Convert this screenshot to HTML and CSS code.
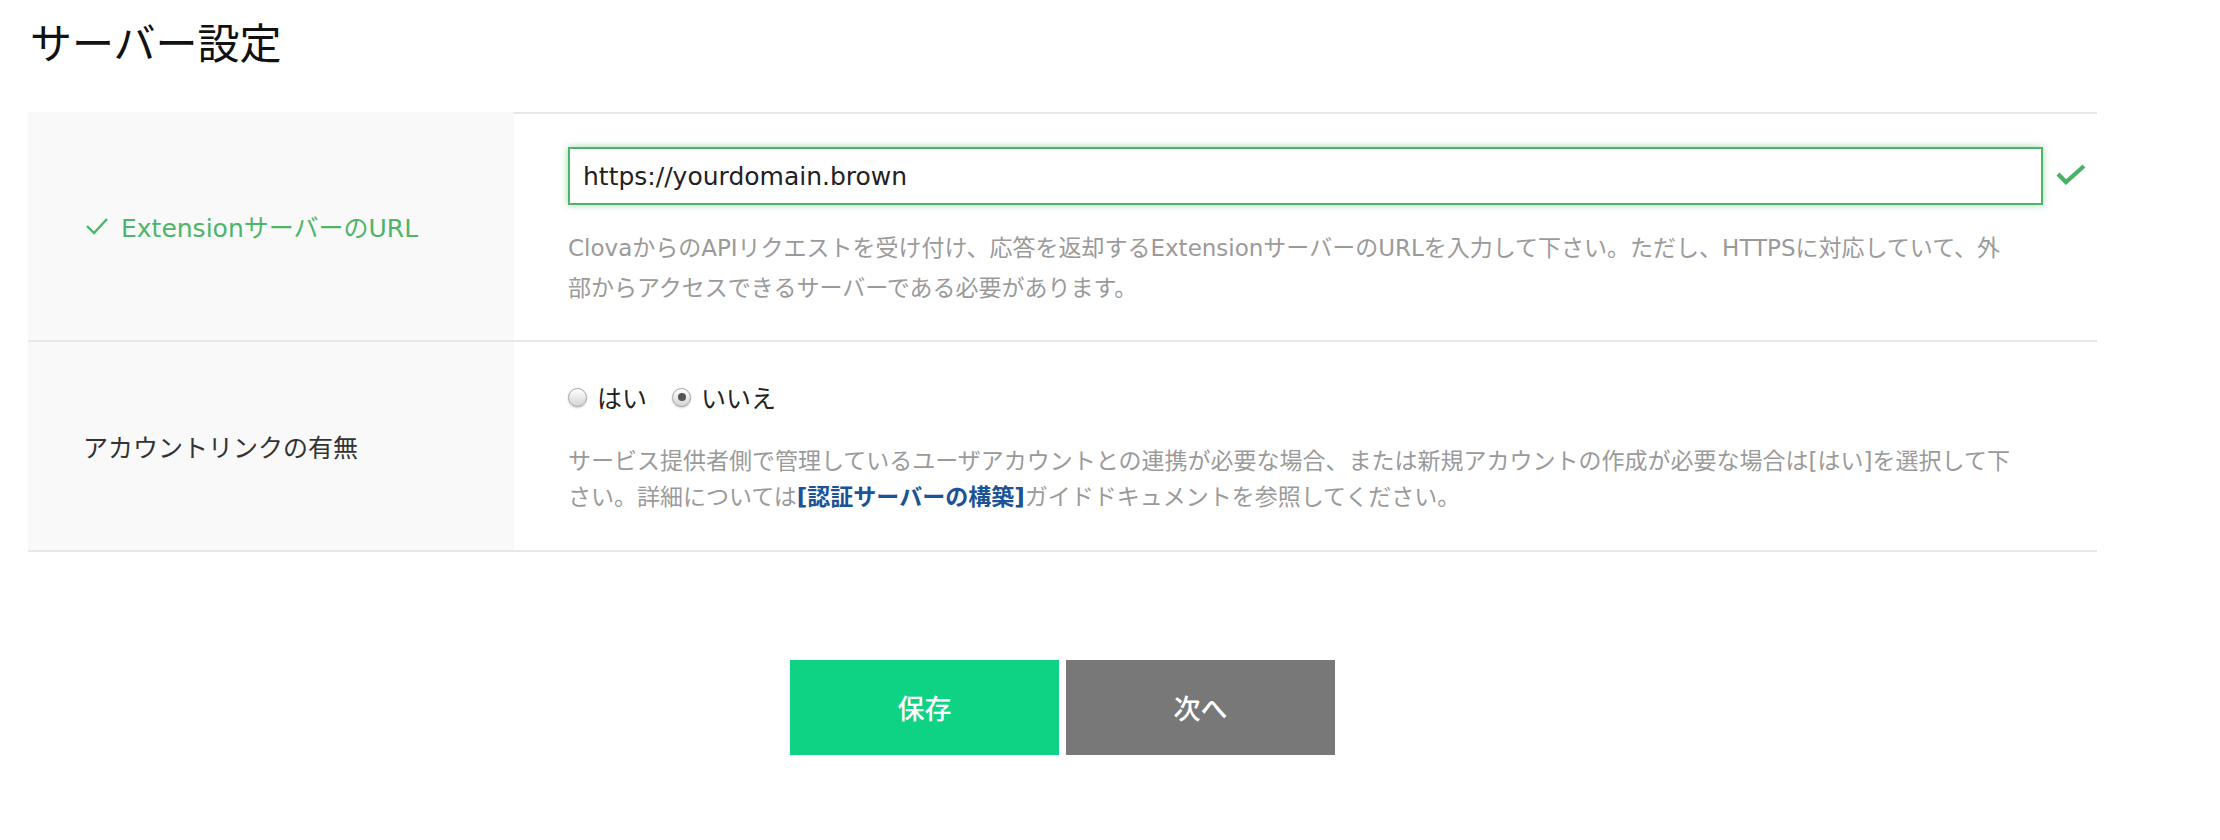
FILE: index.html
```html
<!DOCTYPE html>
<html lang="ja">
<head>
<meta charset="utf-8">
<title>サーバー設定</title>
<link rel="stylesheet" href="styles.css">
</head>
<body>
<div class="page">
  <h1 class="title">サーバー設定</h1>
  <div class="form">
    <div class="row row-first">
      <div class="label label-ok">
        <svg class="label-check" width="24" height="20" viewBox="0 0 24 20"><path d="M2 10 L9 17 L22 3" fill="none" stroke="#4db46a" stroke-width="2.4"/></svg>
        <span>ExtensionサーバーのURL</span>
      </div>
      <div class="value value-first">
        <div class="url-field">
          <input class="url-input" type="text" value="https://yourdomain.brown">
          <svg class="valid-check" width="32" height="24" viewBox="0 0 32 24"><path d="M3 11 L11 19 L29 3" fill="none" stroke="#47b266" stroke-width="4.2"/></svg>
        </div>
        <p class="desc desc-url">ClovaからのAPIリクエストを受け付け、応答を返却するExtensionサーバーのURLを入力して下さい。ただし、HTTPSに対応していて、外<br>部からアクセスできるサーバーである必要があります。</p>
      </div>
    </div>
    <div class="row">
      <div class="label">
        <span>アカウントリンクの有無</span>
      </div>
      <div class="value value-second">
        <div class="radios">
          <span class="radio"></span><span class="radio-text">はい</span>
          <span class="radio radio-on"></span><span class="radio-text">いいえ</span>
        </div>
        <p class="desc desc-link">サービス提供者側で管理しているユーザアカウントとの連携が必要な場合、または新規アカウントの作成が必要な場合は[はい]を選択して下<br>さい。詳細については<a class="doc-link" href="#">[認証サーバーの構築]</a>ガイドドキュメントを参照してください。</p>
      </div>
    </div>
  </div>
  <div class="actions">
    <button class="btn btn-save" type="button">保存</button>
    <button class="btn btn-next" type="button">次へ</button>
  </div>
</div>
</body>
</html>
```
FILE: styles.css
```css
html, body {
  margin: 0;
  padding: 0;
  background: #ffffff;
}

body {
  font-family: "DejaVu Sans", "Noto Sans CJK JP", sans-serif;
  color: #222222;
}

.page {
  padding-left: 28px;
  width: 2069px;
}

.title {
  margin: 20px 0 50px 2px;
  font-family: "Noto Sans CJK JP", sans-serif;
  font-size: 42px;
  line-height: 42px;
  font-weight: normal;
  color: #111111;
}

.form {
  display: flex;
  flex-direction: column;
}

.row {
  display: grid;
  grid-template-columns: 486px 1fr;
  border-bottom: 2px solid #e7e7e7;
}

.label {
  background: #f9f9f9;
  display: flex;
  align-items: center;
  padding-left: 55px;
  font-size: 25px;
  color: #333333;
}

.label-ok {
  color: #4db46a;
  padding-left: 57px;
}

.label-check {
  margin-right: 12px;
  flex: none;
}

.value {
  padding-left: 54px;
  padding-right: 0;
}

.value-first {
  border-top: 2px solid #e7e7e7;
  padding-top: 33px;
  padding-bottom: 32px;
}

.value-second {
  padding-top: 40px;
  padding-bottom: 35px;
}

.url-field {
  display: flex;
  align-items: center;
}

.url-input {
  box-sizing: border-box;
  width: 1475px;
  height: 58px;
  margin: 0;
  border: 2px solid #4db46a;
  box-shadow: 0 0 7px rgba(77, 180, 106, 0.55);
  outline: none;
  padding: 0 13px;
  font-family: "DejaVu Sans", "Noto Sans CJK JP", sans-serif;
  font-size: 25px;
  color: #222222;
  background: #ffffff;
}

.valid-check {
  margin-left: 12px;
  margin-top: -2px;
  flex: none;
}

.desc {
  margin: 0;
  width: 1475px;
  font-size: 23px;
  color: #9a9a9a;
}

.desc-url {
  margin-top: 23px;
  line-height: 40px;
}

.desc-link {
  margin-top: 31px;
  line-height: 36px;
}

.doc-link {
  color: #1b5396;
  font-weight: bold;
  text-decoration: none;
}

.radios {
  display: flex;
  align-items: center;
  height: 30px;
  font-size: 25px;
  color: #222222;
}

.radio {
  flex: none;
  box-sizing: border-box;
  width: 19px;
  height: 19px;
  border-radius: 50%;
  border: 1px solid #a5a5a5;
  background: linear-gradient(#ffffff, #d4d4d4);
  box-shadow: 0 1px 2px rgba(0, 0, 0, 0.22);
  display: flex;
  align-items: center;
  justify-content: center;
  margin-right: 10px;
}

.radio-on::after {
  content: "";
  width: 8px;
  height: 8px;
  border-radius: 50%;
  background: #555555;
}

.radio-text {
  margin-right: 25px;
}

.actions {
  display: flex;
  justify-content: center;
  gap: 7px;
  margin-top: 108px;
}

.btn {
  width: 269px;
  height: 95px;
  border: none;
  margin: 0;
  padding: 0;
  font-family: "Noto Sans CJK JP", sans-serif;
  font-size: 27px;
  font-weight: 500;
  color: #ffffff;
  cursor: pointer;
}

.btn-save {
  background: #0ed284;
}

.btn-next {
  background: #787878;
}
```
